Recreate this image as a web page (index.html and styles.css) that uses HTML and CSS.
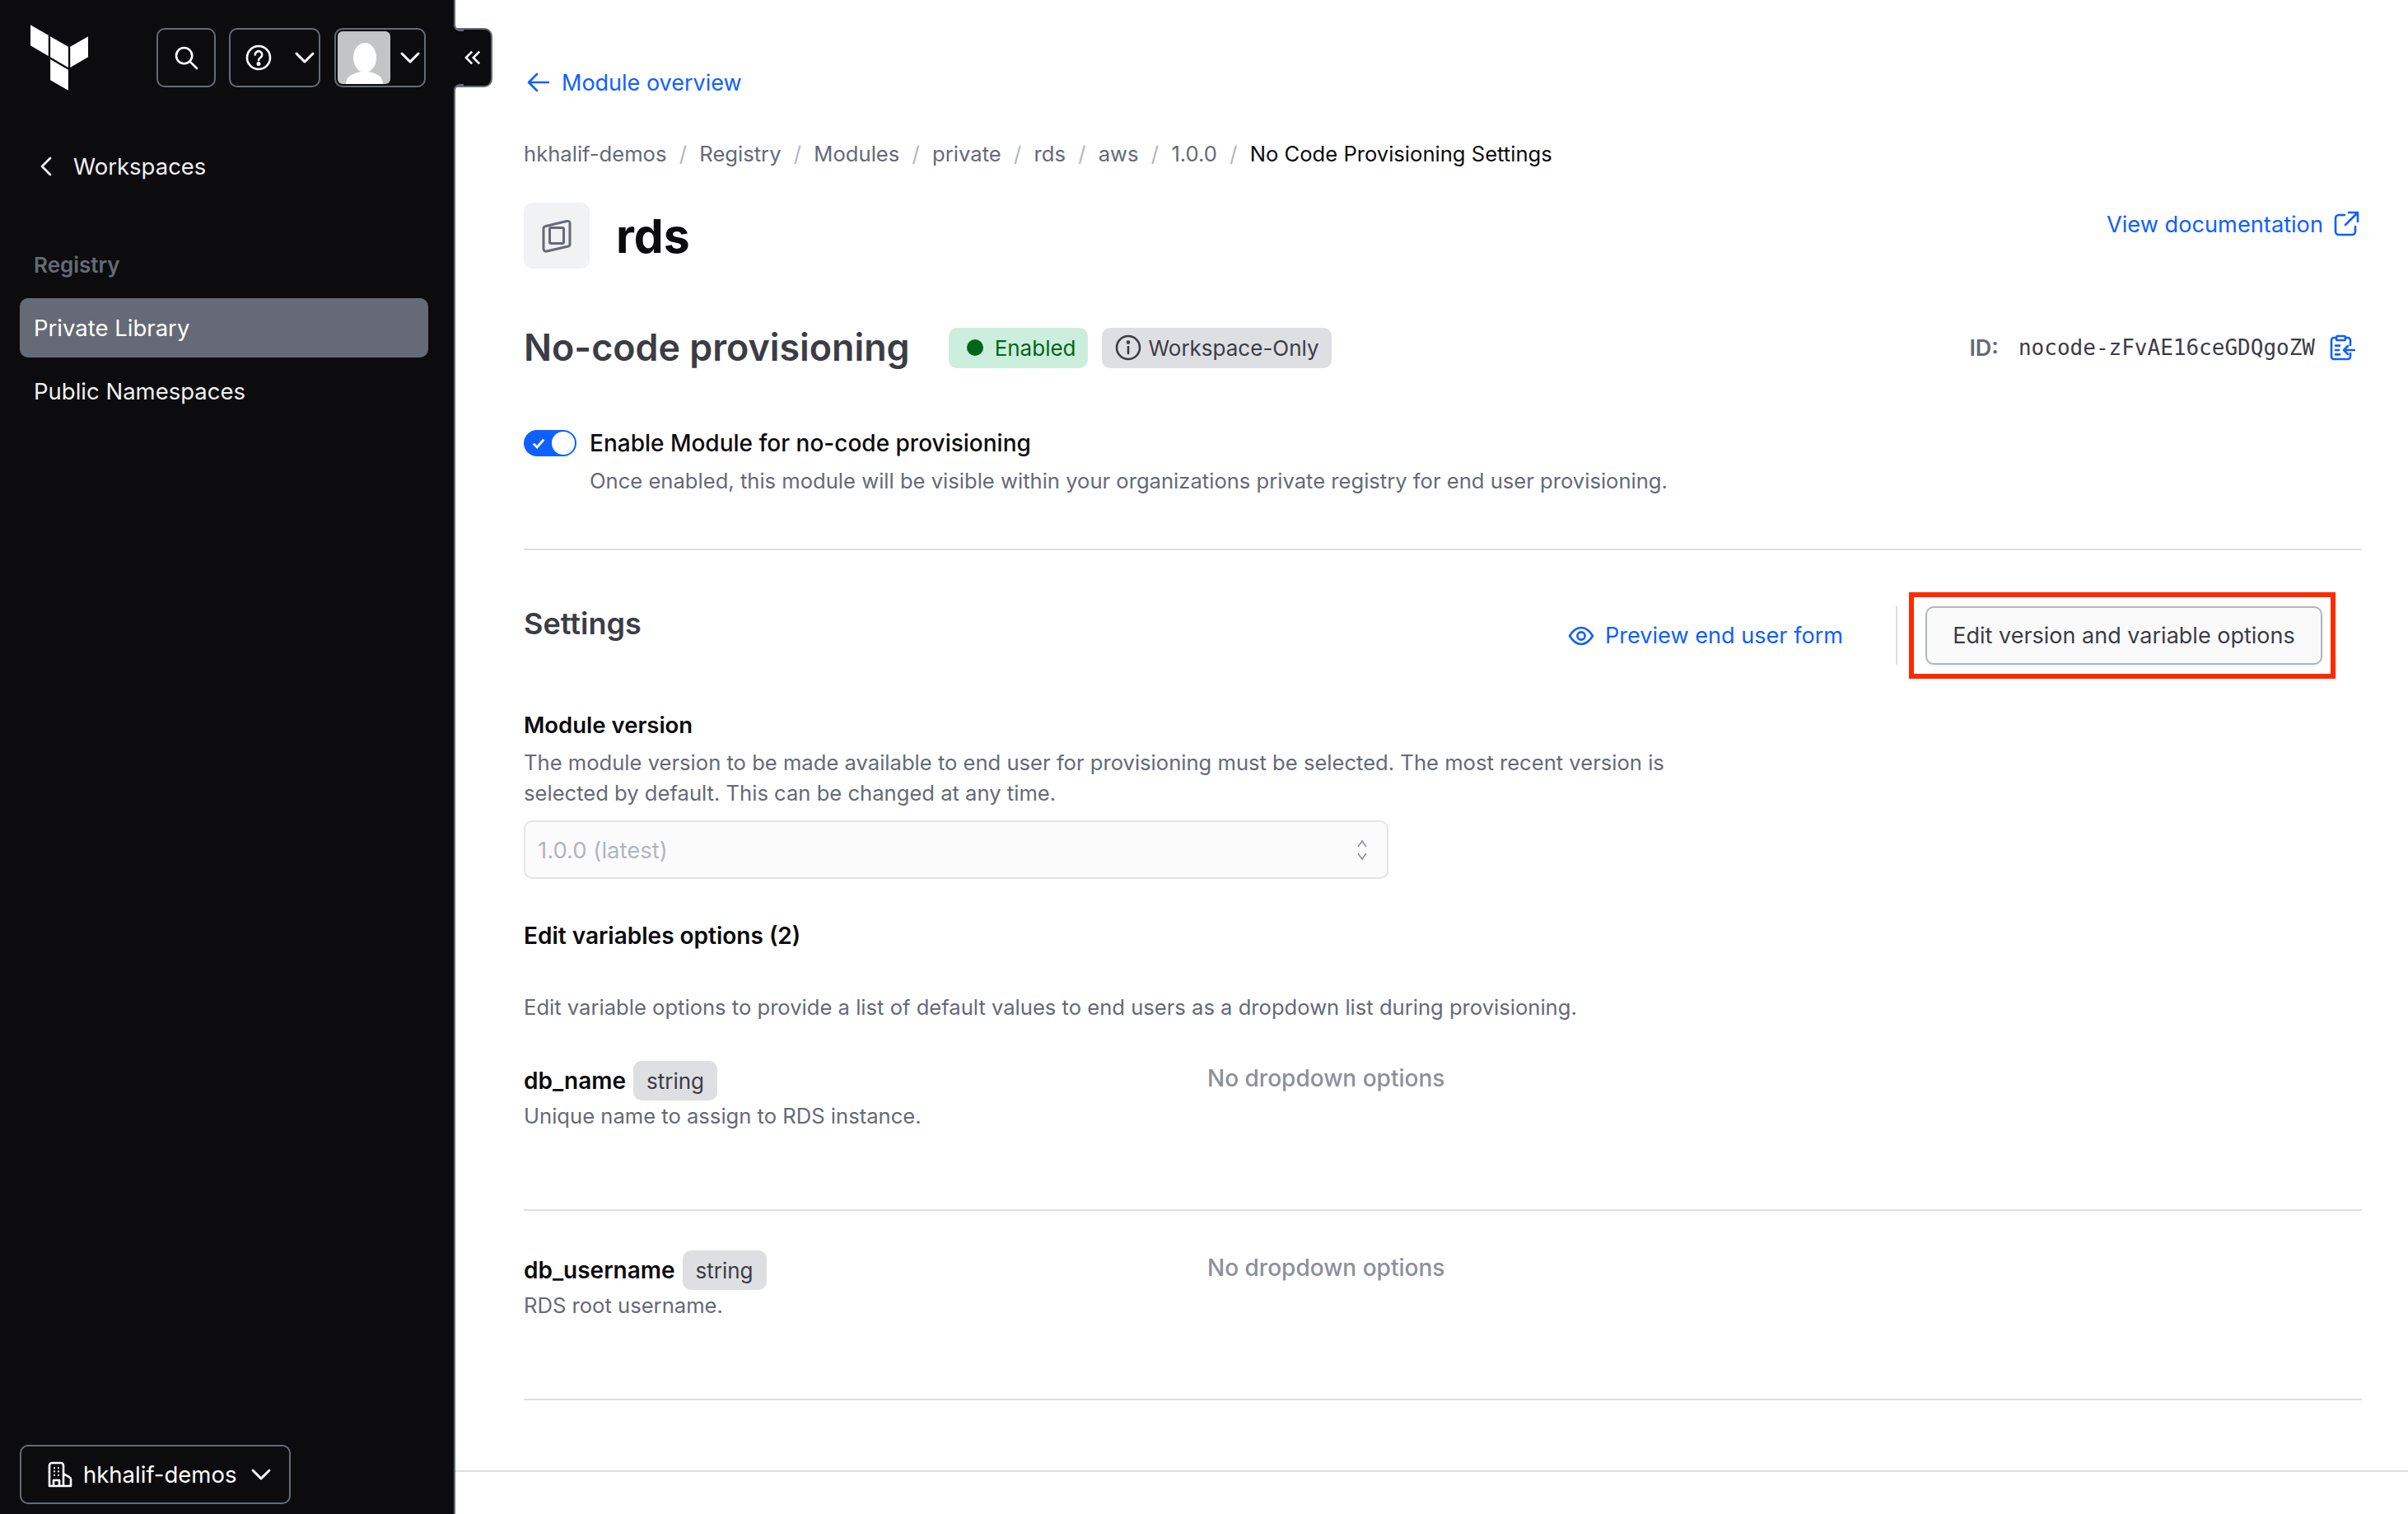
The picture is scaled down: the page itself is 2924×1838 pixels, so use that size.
FILE: index.html
```html
<!DOCTYPE html>
<html>
<head>
    <title>No Code Provisioning Settings</title>
    <link rel="stylesheet" href="styles.css">
</head>
<body>
    <aside class="sidebar">
        <div class="topbar">
            <svg class="logo" viewBox="1.44 0 21.12 24" fill="#fff"><path d="M1.44 0v7.575l6.561 3.79V3.787zm21.12 4.227l-6.561 3.791v7.574l6.56-3.787zM8.72 4.23v7.575l6.561 3.787V8.018zm0 8.405v7.575L15.28 24v-7.578z"/></svg>
            <button class="nav-btn search-btn">
                <svg class="icon" viewBox="0 0 16 16"><circle cx="6.8" cy="6.8" r="4.8"/><path d="M10.4 10.4L14.5 14.5"/></svg>
            </button>
            <button class="nav-btn help-btn">
                <svg class="icon" viewBox="0 0 16 16"><circle cx="8" cy="8" r="7"/><path d="M5.9 6.2a2.1 2.1 0 1 1 3.3 1.7C8.5 8.4 8 8.8 8 9.6"/><circle class="dot" cx="8" cy="11.7" r=".6"/></svg>
                <svg class="icon chev" viewBox="0 0 16 16"><path d="M3 5.5L8 10.5L13 5.5"/></svg>
            </button>
            <button class="nav-btn avatar-btn">
                <span class="avatar">
                    <svg viewBox="0 0 64 64"><ellipse cx="33" cy="32" rx="14" ry="18" fill="#fff"/><path d="M10 64c0-10 8-13 23-16c15 3 22 6 22 16z" fill="#fff"/></svg>
                </span>
                <svg class="icon chev" viewBox="0 0 16 16"><path d="M3 5.5L8 10.5L13 5.5"/></svg>
            </button>
        </div>

        <a class="back-link">
            <svg class="icon" viewBox="0 0 16 16"><path d="M10.5 3L5.5 8L10.5 13"/></svg>
            Workspaces
        </a>

        <div class="nav-title">Registry</div>
        <a class="nav-item active">Private Library</a>
        <a class="nav-item">Public Namespaces</a>

        <button class="org-btn">
            <svg class="icon" viewBox="0 0 16 16"><path d="M1.5 15V2.5A1.5 1.5 0 0 1 3 1h5.500A1.500 1.500 0 0 1 10 2.500V15zM10 7.500l3.700 2.200a1.500 1.500 0 0 1 .8 1.300V15H10M4 15v-3.500h3.500V15"/><path class="thin" d="M4.500 4h.01M7 4h.01M4.500 6.200h.01M7 6.200h.01M4.500 8.400h.01M7 8.400h.01"/></svg>
            <span>hkhalif-demos</span>
            <svg class="icon org-chev" viewBox="0 0 16 16"><path d="M3 5.500L8 10.500L13 5.500"/></svg>
        </button>

        <button class="collapse-tab">
            <svg viewBox="0 0 16 16"><path d="M7.500 3.500L3 8L7.500 12.500M13 3.500L8.500 8L13 12.500"/></svg>
        </button>
    </aside>

    <main class="main">
        <a class="link module-link">
            <svg class="icon" viewBox="0 0 16 16"><path d="M14 8H2M7 3L2 8L7 13"/></svg>
            Module overview
        </a>

        <nav class="breadcrumb">
            <span>hkhalif-demos</span><i>/</i>
            <span>Registry</span><i>/</i>
            <span>Modules</span><i>/</i>
            <span>private</span><i>/</i>
            <span>rds</span><i>/</i>
            <span>aws</span><i>/</i>
            <span>1.0.0</span><i>/</i>
            <span class="current">No Code Provisioning Settings</span>
        </nav>

        <div class="title-row">
            <div class="module-tile">
                <svg viewBox="0 0 36 41"><path d="M5 8.500L30 2.500Q34 1.800 34 5V30.500Q34 32.500 32 33L6 39Q2 39.500 2 36V11.500Q2 9.200 5 8.500z"/><rect x="9.500" y="10.500" width="17" height="19" rx="1.500"/></svg>
            </div>
            <h1>rds</h1>
            <a class="link doc-link">
                View documentation
                <svg class="icon" viewBox="0 0 16 16"><path d="M7 2.500H3.500A2 2 0 0 0 1.500 4.500V12.500A2 2 0 0 0 3.500 14.500H11.500A2 2 0 0 0 13.500 12.500V9.500M9.500 1H15V6.500M15 1L7.500 8.500"/></svg>
            </a>
        </div>

        <div class="heading-row">
            <h2>No-code provisioning</h2>
            <span class="badge badge-green"><b class="status-dot"></b>Enabled</span>
            <span class="badge badge-gray">
                <svg class="icon" viewBox="0 0 16 16"><circle cx="8" cy="8" r="7"/><path d="M8 7.500V11.500"/><circle class="dot" cx="8" cy="4.800" r=".5"/></svg>
                Workspace-Only
            </span>
            <div class="id-block">
                <span class="id-label">ID:</span>
                <code>nocode-zFvAE16ceGDQgoZW</code>
                <svg class="icon" viewBox="0 0 16 16"><path d="M13 6.500V3.500A1.500 1.500 0 0 0 11.500 2H10M13 11.500V13.500A1.500 1.500 0 0 1 11.500 15H3A1.500 1.500 0 0 1 1.500 13.500V3.500A1.500 1.500 0 0 1 3 2H4.500"/><rect x="4.500" y="1" width="5.500" height="2.500" rx=".8"/><path d="M4 6.800H6.500M4 9.500H6M4 12.200H6.500M15.500 9.500H9M11.500 7L9 9.500L11.500 12"/></svg>
            </div>
        </div>

        <div class="toggle-row">
            <span class="toggle">
                <svg viewBox="0 0 16 16"><path d="M3 8.500L6.500 12L13 4.500"/></svg>
                <b></b>
            </span>
            <label>Enable Module for no-code provisioning</label>
        </div>
        <p class="toggle-help">Once enabled, this module will be visible within your organizations private registry for end user provisioning.</p>

        <hr class="rule rule-first">

        <div class="settings-row">
            <h3>Settings</h3>
            <a class="link preview-link">
                <svg class="icon" viewBox="0 0 16 16"><path d="M1 8C3 4.800 5.300 3 8 3s5 1.800 7 5c-2 3.200-4.300 5-7 5s-5-1.800-7-5z"/><circle cx="8" cy="8" r="2.300"/></svg>
                Preview end user form
            </a>
            <span class="v-rule"></span>
            <div class="red-box">
                <button class="edit-btn">Edit version and variable options</button>
            </div>
        </div>

        <div class="field-label">Module version</div>
        <p class="field-help">The module version to be made available to end user for provisioning must be selected. The most recent version is selected by default. This can be changed at any time.</p>
        <div class="select-box">
            <span>1.0.0 (latest)</span>
            <svg viewBox="0 0 16 28"><path d="M3 10L8 3L13 10M3 18L8 25L13 18"/></svg>
        </div>

        <div class="field-label options-title">Edit variables options (2)</div>
        <p class="options-help">Edit variable options to provide a list of default values to end users as a dropdown list during provisioning.</p>

        <div class="var-row var-first">
            <div>
                <div class="var-name"><strong>db_name</strong><span class="pill">string</span></div>
                <div class="var-help">Unique name to assign to RDS instance.</div>
            </div>
            <div class="no-options">No dropdown options</div>
        </div>
        <hr class="rule rule-var">

        <div class="var-row">
            <div>
                <div class="var-name"><strong>db_username</strong><span class="pill">string</span></div>
                <div class="var-help">RDS root username.</div>
            </div>
            <div class="no-options">No dropdown options</div>
        </div>
        <hr class="rule rule-var">

        <div class="footer-line"></div>
    </main>
</body>
</html>
```

FILE: styles.css
```css
* {
    box-sizing: border-box;
}
body {
    margin: 0;
    display: flex;
    height: 1838px;
    overflow: hidden;
    background-color: #fff;
    color: #0c0c0e;
    font-family: Inter, "Liberation Sans", sans-serif;
    font-size: 27px;
}
p, h1, h2, h3 {
    margin: 0;
    font-weight: 600;
}
button {
    font-family: inherit;
}
.icon {
    width: 32px;
    height: 32px;
    flex: none;
    fill: none;
    stroke: currentColor;
    stroke-width: 1.3;
    stroke-linecap: round;
    stroke-linejoin: round;
}
.icon .dot {
    fill: currentColor;
}

/* sidebar */
.sidebar {
    position: relative;
    flex: none;
    width: 553px;
    height: 100%;
    display: flex;
    flex-direction: column;
    padding: 34px 31px 12px 24px;
    background-color: #0c0c0e;
    border-right: 2px solid #656a76;
    color: #efeff1;
}
.topbar {
    display: flex;
    align-items: center;
    height: 72px;
    padding-left: 13px;
}
.logo {
    width: 70px;
    height: 80px;
    margin-right: 83px;
}
.nav-btn {
    display: flex;
    align-items: center;
    height: 72px;
    padding: 0;
    background: transparent;
    border: 2px solid #656a76;
    border-radius: 10px;
    color: #fff;
}
.search-btn {
    width: 72px;
    justify-content: center;
}
.help-btn {
    width: 111px;
    margin-left: 16px;
    padding-left: 18px;
}
.help-btn .chev {
    margin-left: 24px;
}
.avatar-btn {
    width: 111px;
    margin-left: 17px;
    padding-left: 2px;
}
.avatar-btn .chev {
    margin-left: 8px;
}
.chev {
    stroke-width: 1.5;
}
.avatar {
    width: 64px;
    height: 64px;
    border-radius: 6px;
    overflow: hidden;
    background-color: #c3c4c6;
}
.avatar svg {
    display: block;
    width: 100%;
    height: 100%;
}
.back-link {
    display: flex;
    align-items: center;
    height: 40px;
    margin-top: 76px;
    padding-left: 16px;
    font-size: 27.5px;
    line-height: 40px;
}
.back-link .icon {
    width: 32px;
    margin-right: 17px;
    stroke-width: 1.4;
}
.nav-title {
    height: 40px;
    margin-top: 80px;
    padding-left: 17px;
    color: #656a76;
    font-size: 26px;
    font-weight: 600;
    line-height: 40px;
}
.nav-item {
    display: block;
    height: 72px;
    margin-top: 5px;
    padding-left: 17px;
    border-radius: 10px;
    font-size: 27.5px;
    line-height: 72px;
}
.nav-item.active {
    margin-top: 20px;
    background-color: #656a76;
    color: #fff;
}
.org-btn {
    display: flex;
    align-items: center;
    width: 329px;
    height: 72px;
    margin-top: auto;
    padding: 0 0 0 31px;
    background: transparent;
    border: 2px solid #656a76;
    border-radius: 10px;
    color: #fff;
    font-size: 27.5px;
}
.org-btn span {
    margin-left: 12px;
}
.org-btn .org-chev {
    margin-left: 14px;
    stroke-width: 1.5;
}
.org-btn .thin {
    stroke-width: 1.1;
}
.collapse-tab {
    position: absolute;
    top: 34px;
    left: 549px;
    display: flex;
    align-items: center;
    justify-content: center;
    width: 49px;
    height: 72px;
    padding: 0 0 0 2px;
    background-color: #0c0c0e;
    border: 2px solid #656a76;
    border-left: none;
    border-radius: 0 10px 10px 0;
}
.collapse-tab svg {
    width: 26px;
    height: 26px;
    fill: none;
    stroke: #fff;
    stroke-width: 1.6;
}
/* little fillets where the tab meets the sidebar edge */
.collapse-tab::before,
.collapse-tab::after {
    content: "";
    position: absolute;
    left: 2px;
    width: 10px;
    height: 10px;
    border-left: 2px solid #656a76;
}
.collapse-tab::before {
    top: -10px;
    border-bottom: 2px solid #656a76;
    border-bottom-left-radius: 8px;
    box-shadow: -4px 4px 0 #0c0c0e;
}
.collapse-tab::after {
    bottom: -10px;
    border-top: 2px solid #656a76;
    border-top-left-radius: 8px;
    box-shadow: -4px -4px 0 #0c0c0e;
}

/* main column */
.main {
    flex: 1;
    min-width: 0;
    padding: 0 56px 0 83px;
}
.link {
    color: #1060ff;
}
.module-link {
    display: flex;
    align-items: center;
    height: 40px;
    margin-top: 80px;
    padding-left: 2px;
    font-size: 27px;
}
.module-link .icon {
    margin-right: 12px;
}
.breadcrumb {
    display: flex;
    align-items: center;
    height: 40px;
    margin-top: 46px;
    color: #656a76;
    font-size: 25.6px;
}
.breadcrumb i {
    margin: 0 15.3px;
    color: #b2b6bd;
    font-style: normal;
}
.breadcrumb .current {
    color: #0c0c0e;
}
.title-row {
    display: flex;
    align-items: center;
    height: 80px;
    margin-top: 40px;
}
.module-tile {
    display: flex;
    align-items: center;
    justify-content: center;
    width: 80px;
    height: 80px;
    border-radius: 10px;
    background-color: #f1f2f3;
}
.module-tile svg {
    width: 36px;
    height: 41px;
    fill: none;
    stroke: #656a76;
    stroke-width: 3;
}
h1 {
    margin-left: 32px;
    font-size: 57px;
    font-weight: 700;
}
.doc-link {
    display: flex;
    align-items: center;
    gap: 12px;
    margin: -28px 3px 0 auto;
    font-size: 27.2px;
}
.heading-row {
    display: flex;
    align-items: center;
    height: 50px;
    margin-top: 71px;
}
h2 {
    margin-right: 47px;
    color: #3b3d45;
    font-size: 44.8px;
    line-height: 50px;
}
.badge {
    display: flex;
    align-items: center;
    height: 49px;
    border-radius: 10px;
    font-size: 26px;
}
.badge-green {
    padding: 0 14px 0 22px;
    background-color: #cceedd;
    color: #00661a;
}
.status-dot {
    width: 20px;
    height: 20px;
    margin-right: 14px;
    border-radius: 50%;
    background-color: #00661a;
}
.badge-gray {
    margin-left: 17px;
    padding: 0 15px 0 16px;
    background-color: #dedfe3;
    color: #3b3d45;
}
.badge-gray .icon {
    margin-right: 9px;
}
.id-block {
    display: flex;
    align-items: center;
    margin-left: auto;
    padding-right: 8px;
    color: #3b3d45;
}
.id-label {
    margin-right: 24px;
    color: #656a76;
    font-size: 27px;
    font-weight: 600;
}
code {
    font-family: "DejaVu Sans Mono", monospace;
    font-size: 26px;
}
.id-block .icon {
    margin-left: 17px;
    color: #1060ff;
}
.toggle-row {
    display: flex;
    align-items: center;
    height: 32px;
    margin-top: 75px;
}
.toggle {
    display: flex;
    align-items: center;
    justify-content: space-between;
    width: 64px;
    height: 32px;
    padding: 2px;
    border-radius: 16px;
    background-color: #1060ff;
}
.toggle svg {
    width: 20px;
    height: 20px;
    margin-left: 6px;
    fill: none;
    stroke: #fff;
    stroke-width: 2.2;
}
.toggle b {
    width: 28px;
    height: 28px;
    border-radius: 50%;
    background-color: #fff;
}
.toggle-row label {
    margin-left: 16px;
    font-size: 28px;
    font-weight: 500;
}
.toggle-help {
    margin: 10px 0 0 80px;
    color: #656a76;
    font-size: 25.6px;
    font-weight: 400;
    line-height: 40px;
}
.rule {
    height: 2px;
    margin: 0;
    border: none;
    background-color: #dedfe3;
}
.rule-first {
    margin-top: 62px;
}
.rule-var {
    margin-top: 93px;
}
.settings-row {
    display: flex;
    align-items: center;
    height: 105px;
    margin-top: 51px;
    padding-right: 32px;
}
h3 {
    align-self: flex-start;
    margin-top: 18px;
    color: #3b3d45;
    font-size: 36px;
    line-height: 40px;
}
.preview-link {
    display: flex;
    align-items: center;
    gap: 13px;
    margin-left: auto;
    font-size: 27.1px;
}
.v-rule {
    width: 2px;
    height: 71px;
    margin: 0 14px 0 64px;
    background-color: #dedfe3;
}
.red-box {
    display: flex;
    align-items: center;
    width: 518px;
    height: 105px;
    padding-left: 14px;
    border: 6px solid #ff2a00;
}
.edit-btn {
    width: 482px;
    height: 71px;
    padding: 0;
    background-color: #fafafa;
    border: 2px solid #b2b6bd;
    border-radius: 10px;
    box-shadow: 0 2px 3px rgba(101, 106, 118, 0.1);
    color: #3b3d45;
    font-size: 27px;
}
.field-label {
    height: 40px;
    margin-top: 36px;
    font-size: 27.5px;
    font-weight: 600;
    line-height: 40px;
}
.field-help {
    width: 1400px;
    margin-top: 7px;
    color: #656a76;
    font-size: 25.6px;
    font-weight: 400;
    line-height: 37px;
}
.select-box {
    display: flex;
    align-items: center;
    justify-content: space-between;
    width: 1050px;
    height: 71px;
    margin-top: 15px;
    padding: 0 22px 0 15px;
    background-color: #fbfbfb;
    border: 2px solid #e4e5e8;
    border-radius: 10px;
    color: #b2b6bd;
    font-size: 27.5px;
}
.select-box svg {
    width: 16px;
    height: 28px;
    fill: none;
    stroke: #8c909c;
    stroke-width: 1.6;
}
.options-title {
    margin-top: 49px;
    font-size: 28px;
}
.options-help {
    margin-top: 47px;
    color: #656a76;
    font-size: 25.6px;
    font-weight: 400;
    line-height: 40px;
}
.var-row {
    display: grid;
    grid-template-columns: 830px 1fr;
    margin-top: 48px;
}
.var-first {
    margin-top: 45px;
}
.var-name {
    display: flex;
    align-items: center;
    height: 48px;
}
.var-name strong {
    margin-right: 9px;
    font-size: 28px;
    font-weight: 600;
}
.pill {
    height: 48px;
    padding: 0 16px;
    border-radius: 10px;
    background-color: #dedfe3;
    color: #3b3d45;
    font-size: 26px;
    line-height: 50px;
}
.var-help {
    margin-top: -1px;
    color: #656a76;
    font-size: 25.6px;
    line-height: 40px;
}
.no-options {
    margin-top: 1px;
    color: #8c909c;
    font-size: 28px;
    font-weight: 500;
    line-height: 40px;
}
.footer-line {
    height: 2px;
    margin: 85px -56px 0 -83px;
    background-color: #dedfe3;
}
```
